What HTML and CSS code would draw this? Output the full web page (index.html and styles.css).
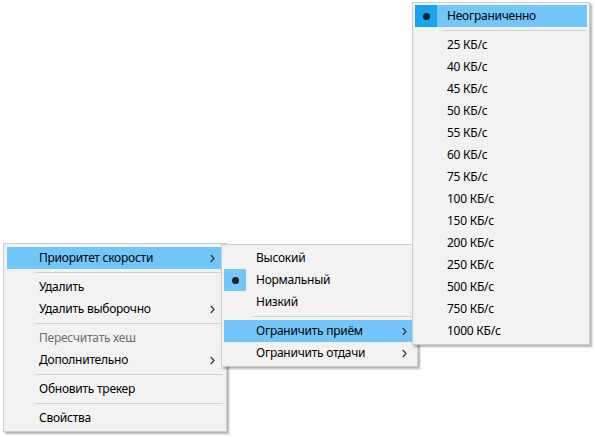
FILE: index.html
```html
<!DOCTYPE html>
<html lang="ru">
<head>
<meta charset="utf-8">
<link rel="stylesheet" href="styles.css">
</head>
<body>
<div class="desk">
  <div class="menu m1">
    <div class="item hot"><span class="check"></span><span class="label">Приоритет скорости</span><svg class="arrow" width="5" height="9" viewBox="0 0 5 9"><polyline points="0.8,1 4,4.5 0.8,8"/></svg></div>
    <div class="sep"></div>
    <div class="item"><span class="check"></span><span class="label">Удалить</span></div>
    <div class="item"><span class="check"></span><span class="label">Удалить выборочно</span><svg class="arrow" width="5" height="9" viewBox="0 0 5 9"><polyline points="0.8,1 4,4.5 0.8,8"/></svg></div>
    <div class="sep"></div>
    <div class="item disabled"><span class="check"></span><span class="label">Пересчитать хеш</span></div>
    <div class="item"><span class="check"></span><span class="label">Дополнительно</span><svg class="arrow" width="5" height="9" viewBox="0 0 5 9"><polyline points="0.8,1 4,4.5 0.8,8"/></svg></div>
    <div class="sep"></div>
    <div class="item"><span class="check"></span><span class="label">Обновить трекер</span></div>
    <div class="sep"></div>
    <div class="item"><span class="check"></span><span class="label">Свойства</span></div>
  </div>

  <div class="menu m2">
    <div class="item"><span class="check"></span><span class="label">Высокий</span></div>
    <div class="item"><span class="check on"><i class="dot"></i></span><span class="label">Нормальный</span></div>
    <div class="item"><span class="check"></span><span class="label">Низкий</span></div>
    <div class="sep"></div>
    <div class="item hot"><span class="check"></span><span class="label">Ограничить приём</span><svg class="arrow" width="5" height="9" viewBox="0 0 5 9"><polyline points="0.8,1 4,4.5 0.8,8"/></svg></div>
    <div class="item"><span class="check"></span><span class="label">Ограничить отдачи</span><svg class="arrow" width="5" height="9" viewBox="0 0 5 9"><polyline points="0.8,1 4,4.5 0.8,8"/></svg></div>
  </div>

  <div class="menu m3">
    <div class="item hot"><span class="check on"><i class="dot"></i></span><span class="label">Неограниченно</span></div>
    <div class="sep"></div>
    <div class="item"><span class="check"></span><span class="label">25 КБ/с</span></div>
    <div class="item"><span class="check"></span><span class="label">40 КБ/с</span></div>
    <div class="item"><span class="check"></span><span class="label">45 КБ/с</span></div>
    <div class="item"><span class="check"></span><span class="label">50 КБ/с</span></div>
    <div class="item"><span class="check"></span><span class="label">55 КБ/с</span></div>
    <div class="item"><span class="check"></span><span class="label">60 КБ/с</span></div>
    <div class="item"><span class="check"></span><span class="label">75 КБ/с</span></div>
    <div class="item"><span class="check"></span><span class="label">100 КБ/с</span></div>
    <div class="item"><span class="check"></span><span class="label">150 КБ/с</span></div>
    <div class="item"><span class="check"></span><span class="label">200 КБ/с</span></div>
    <div class="item"><span class="check"></span><span class="label">250 КБ/с</span></div>
    <div class="item"><span class="check"></span><span class="label">500 КБ/с</span></div>
    <div class="item"><span class="check"></span><span class="label">750 КБ/с</span></div>
    <div class="item"><span class="check"></span><span class="label">1000 КБ/с</span></div>
  </div>
</div>
</body>
</html>
```

FILE: styles.css
```css
html, body {
  margin: 0;
  padding: 0;
  background: #ffffff;
}

.desk {
  position: relative;
  width: 595px;
  height: 437px;
  overflow: hidden;
  font-family: "Noto Sans", "Open Sans", sans-serif;
  font-size: 12px;
  letter-spacing: -0.25px;
  color: #000000;
}

.menu {
  position: absolute;
  box-sizing: border-box;
  background: #f2f2f2;
  border: 1px solid #cccccc;
  padding: 2px;
  box-shadow: 2px 2px 2px rgba(0, 0, 0, 0.3);
}

.m1 {
  left: 3px;
  top: 243px;
  width: 224px;
  padding: 3px 3px 2px 3px;
}

.m2 {
  left: 221px;
  top: 244px;
  width: 197px;
}

.m3 {
  left: 412px;
  top: 2px;
  width: 178px;
}

.item {
  display: flex;
  align-items: center;
  height: 22px;
  white-space: nowrap;
}

.item.hot {
  background: #72c6f9;
}

.item.disabled {
  color: #6d6d6d;
}

.check {
  flex: none;
  width: 22px;
  height: 22px;
  display: flex;
  align-items: center;
  justify-content: center;
}

.check.on {
  background: #72c6f9;
}

.item.hot .check.on {
  background: #1ba3f2;
}

.dot {
  display: block;
  width: 7px;
  height: 7px;
  border-radius: 50%;
  background: #222222;
}

.label {
  flex: 1;
  margin-left: 10px;
  line-height: 22px;
}

.arrow {
  flex: none;
  margin-right: 8px;
}

.arrow polyline {
  fill: none;
  stroke: #333333;
  stroke-width: 1.2;
}

.sep {
  height: 7px;
  display: flex;
  align-items: center;
  padding-left: 28px;
}

.sep::before {
  content: "";
  flex: 1;
  height: 1px;
  background: #d2d2d2;
}
```
